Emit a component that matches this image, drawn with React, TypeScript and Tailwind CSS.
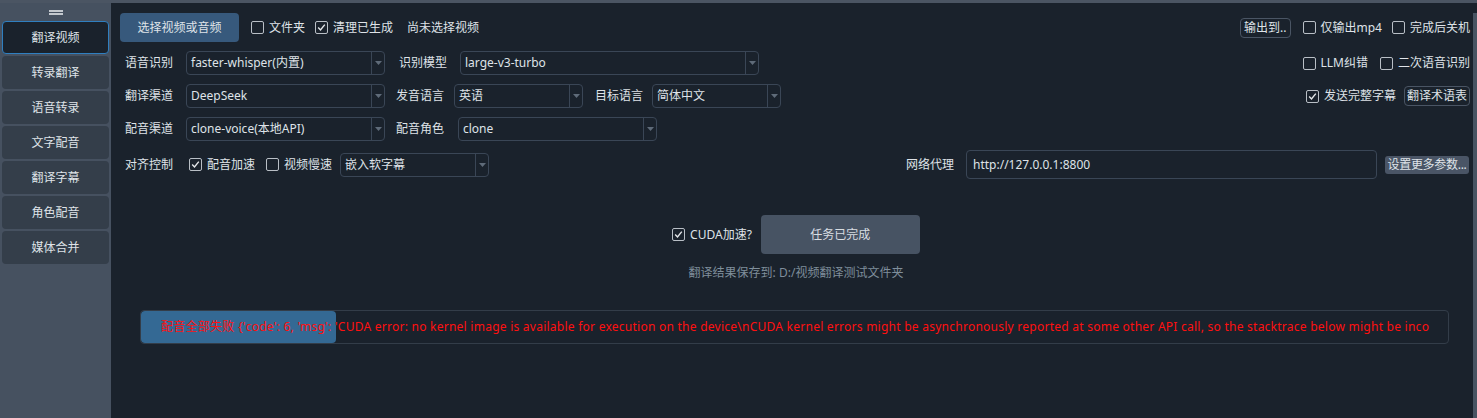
import React from "react";

const FONT = { fontFamily: '"Microsoft YaHei", "Noto Sans", "Noto Sans CJK SC", sans-serif' };

function Check({ checked, className = "" }: { checked?: boolean; className?: string }) {
  return (
    <span
      className={`flex h-[13px] w-[13px] shrink-0 items-center justify-center rounded-[2px] border border-[#b9bfc6] ${className}`}
    >
      {checked && (
        <svg width="9" height="9" viewBox="0 0 9 9" fill="none">
          <path d="M1.2 4.6 L3.5 7 L7.8 1.6" stroke="#e4e7ea" strokeWidth="1.4" />
        </svg>
      )}
    </span>
  );
}

function CheckLabel({ checked, text, className = "" }: { checked?: boolean; text: string; className?: string }) {
  return (
    <div className={`flex items-center gap-[5px] ${className}`}>
      <Check checked={checked} />
      <span className="whitespace-nowrap">{text}</span>
    </div>
  );
}

function Select({ value, width, className = "" }: { value: string; width: string; className?: string }) {
  return (
    <div className={`flex h-[24px] items-stretch rounded-[4px] border border-[#3a4656] ${width} ${className}`}>
      <span className="flex flex-1 items-center overflow-hidden whitespace-nowrap pl-[4px]">{value}</span>
      <span className="flex w-[13px] items-center justify-center border-l border-[#3a4656]">
        <svg width="7" height="4" viewBox="0 0 7 4">
          <path d="M0 0 H7 L3.5 4 Z" fill="#5f6b79" />
        </svg>
      </span>
    </div>
  );
}

const nav = ["翻译视频", "转录翻译", "语音转录", "文字配音", "翻译字幕", "角色配音", "媒体合并"];

export default function App() {
  return (
    <div style={FONT} className="flex h-[418px] w-[1477px] flex-col overflow-hidden bg-[#1a222c] text-[12px] text-[#dfe3e8]">
      <div className="h-[3px] bg-[#4b5563]" />
      <div className="flex flex-1">
        {/* Sidebar */}
        <div className="flex w-[111px] flex-col bg-[#465160] px-[2px]">
          <div className="flex flex-col items-center gap-[1px] pt-[7px]">
            <span className="h-[2px] w-[14px] bg-[#c3c8ce]" />
            <span className="h-[2px] w-[14px] bg-[#c3c8ce]" />
          </div>
          <div className="mt-[6px] flex flex-col gap-[2px]">
            {nav.map((n, i) => (
              <div
                key={n}
                className={`flex h-[33px] items-center justify-center rounded-[4px] ${
                  i === 0 ? "border border-[#2f7fc0] bg-[#1a222c]" : "bg-[#343e4a]"
                }`}
              >
                {n}
              </div>
            ))}
          </div>
        </div>

        {/* Main */}
        <div className="flex flex-1 flex-col pl-[9px] pr-[3px]">
          {/* Row 1 */}
          <div className="mt-[10px] flex h-[29px] items-center">
            <div className="flex h-[29px] w-[119px] items-center justify-center rounded-[4px] bg-[#37597c]">
              选择视频或音频
            </div>
            <CheckLabel text="文件夹" className="ml-[12px]" />
            <CheckLabel checked text="清理已生成" className="ml-[10px]" />
            <span className="ml-[14px]">尚未选择视频</span>
            <div className="ml-auto flex h-[20px] items-center rounded-[4px] border border-[#4a5564] px-[3px]">
              输出到..
            </div>
            <CheckLabel text="仅输出mp4" className="ml-[12px]" />
            <CheckLabel text="完成后关机" className="ml-[10px]" />
          </div>

          {/* Row 2 */}
          <div className="mt-[9px] flex h-[24px] items-center">
            <span className="ml-[5px] w-[61px]">语音识别</span>
            <Select value="faster-whisper(内置)" width="w-[199px]" />
            <span className="ml-[14px] w-[61px]">识别模型</span>
            <Select value="large-v3-turbo" width="w-[299px]" />
            <CheckLabel text="LLM纠错" className="ml-auto" />
            <CheckLabel text="二次语音识别" className="ml-[12px]" />
          </div>

          {/* Row 3 */}
          <div className="mt-[9px] flex h-[24px] items-center">
            <span className="ml-[5px] w-[61px]">翻译渠道</span>
            <Select value="DeepSeek" width="w-[199px]" />
            <span className="ml-[11px] w-[58px]">发音语言</span>
            <Select value="英语" width="w-[129px]" />
            <span className="ml-[12px] w-[57px]">目标语言</span>
            <Select value="简体中文" width="w-[129px]" />
            <CheckLabel checked text="发送完整字幕" className="ml-auto" />
            <div className="ml-[8px] flex h-[20px] items-center rounded-[4px] border border-[#4a5564] px-[2px]">
              翻译术语表
            </div>
          </div>

          {/* Row 4 */}
          <div className="mt-[9px] flex h-[24px] items-center">
            <span className="ml-[5px] w-[61px]">配音渠道</span>
            <Select value="clone-voice(本地API)" width="w-[199px]" />
            <span className="ml-[11px] w-[62px]">配音角色</span>
            <Select value="clone" width="w-[199px]" />
          </div>

          {/* Row 5 */}
          <div className="mt-[9px] flex h-[29px] items-center">
            <span className="ml-[5px] w-[64px]">对齐控制</span>
            <CheckLabel checked text="配音加速" />
            <CheckLabel text="视频慢速" className="ml-[11px]" />
            <Select value="嵌入软字幕" width="w-[149px]" className="ml-[8px]" />
            <span className="ml-auto">网络代理</span>
            <div className="ml-[12px] flex h-[29px] w-[411px] items-center rounded-[4px] border border-[#3a4656] pl-[6px]">
              http://127.0.0.1:8800
            </div>
            <div className="ml-[8px] mr-[1px] flex h-[18px] w-[84px] items-center justify-center whitespace-nowrap rounded-[3px] bg-[#4a5566] tracking-[-0.3px]">
              设置更多参数...
            </div>
          </div>

          {/* Center action */}
          <div className="mt-[36px] flex items-center justify-center pl-[2px]">
            <CheckLabel checked text="CUDA加速?" />
            <div className="ml-[9px] flex h-[39px] w-[159px] items-center justify-center rounded-[4px] bg-[#475363] text-[#d8dde2]">
              任务已完成
            </div>
          </div>
          <div className="mt-[10px] pl-[2px] text-center text-[#7f8e9b]">翻译结果保存到: D:/视频翻译测试文件夹</div>

          {/* Error */}
          <div className="relative ml-[20px] mr-[21px] mt-[28px] flex h-[34px] items-center overflow-hidden rounded-[4px] border border-[#333d49]">
            <div className="absolute left-0 top-0 h-[32px] w-[195px] rounded-[4px] bg-[#346994]" />
            <span className="relative ml-[20px] whitespace-nowrap tracking-[0.25px] text-[#ff1010]">
              配音全部失败 {"{'code': 6, 'msg': 'CUDA error: no kernel image is available for execution on the device\\nCUDA kernel errors might be asynchronously reported at some other API call, so the stacktrace below might be inco"}
            </span>
          </div>
        </div>

        {/* Right strip */}
        <div className="mt-[10px] w-[4px] bg-[#485462]" />
      </div>
    </div>
  );
}
